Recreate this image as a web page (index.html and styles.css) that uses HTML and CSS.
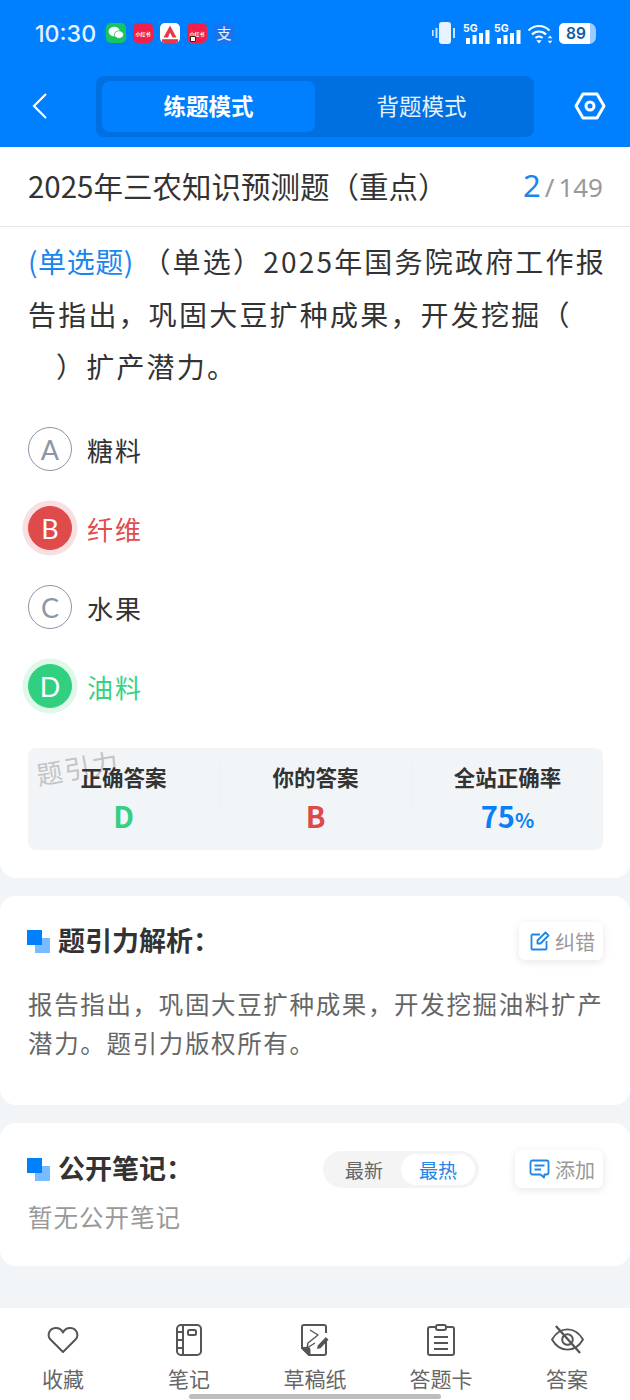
FILE: index.html
```html
<!DOCTYPE html>
<html lang="zh-CN">
<head>
  <meta charset="UTF-8">
  <meta name="viewport" content="width=device-width, initial-scale=1.0">
  <title>题引力</title>
  <link rel="stylesheet" href="styles.css">
</head>
<body>
  <div class="page">
    <header class="top">
      <div class="status">
        <span class="clock">10:30</span>
        <div class="notify">
          <span class="app app-wx">
            <svg width="16" height="14" viewBox="0 0 16 14"><ellipse cx="6.2" cy="5.6" rx="5.6" ry="4.8" fill="#fff"/><ellipse cx="11" cy="8.6" rx="4.6" ry="3.8" fill="#fff" stroke="#17c45e" stroke-width=".8"/></svg>
          </span>
          <span class="app app-red">小红书</span>
          <span class="app app-a">
            <svg width="20" height="20" viewBox="0 0 20 20"><path d="M10 2.5 16.5 14.5h-4L10 9.5 8 14.5H3.5z" fill="#e8374a"/><rect x="2" y="16.2" width="16" height="3.8" fill="#e8374a"/></svg>
          </span>
          <span class="app app-red app-dot">小红书</span>
          <span class="app app-ali">支</span>
        </div>
        <div class="sys">
          <svg width="28" height="22" viewBox="0 0 28 22"><rect x="8" y="0" width="12" height="22" rx="3" fill="#e8f2ff"/><rect x="1" y="8" width="1.6" height="6" fill="#cfe4ff"/><rect x="4.500" y="6" width="2" height="10" fill="#cfe4ff"/><rect x="22" y="6" width="2" height="10" fill="#cfe4ff"/></svg>
          <span class="signal">
            <b>5G</b>
            <svg width="25" height="21" viewBox="0 0 25 21"><rect x="1" y="15" width="4" height="6" fill="#fff"/><rect x="7.5" y="12" width="4" height="9" fill="#fff"/><rect x="14" y="10" width="4" height="11" fill="#fff"/><rect x="20.5" y="7" width="4" height="14" fill="#fff"/></svg>
          </span>
          <span class="signal">
            <b>5G</b>
            <svg width="25" height="21" viewBox="0 0 25 21"><rect x="1" y="15" width="4" height="6" fill="#fff"/><rect x="7.5" y="12" width="4" height="9" fill="#fff"/><rect x="14" y="10" width="4" height="11" fill="#fff"/><rect x="20.5" y="7" width="4" height="14" fill="#fff"/></svg>
          </span>
          <svg width="26" height="21" viewBox="0 0 26 21" fill="none" stroke="#fff" stroke-width="2.2"><path d="M1.5 7.5C7.5 1.5 16.5 1.5 22.5 7.5"/><path d="M5 11.5c4-4 10-4 14 0"/><path d="M8.500 15c2-2 5-2 7 0"/><path d="M12 20.500l-2.600-3.200h5.200z" fill="#fff" stroke="none"/><path d="M23 12.500l-2.300 2.800h4.600zM23 20.500l-2.300-2.800h4.600z" fill="#fff" stroke="none"/></svg>
          <span class="batt"><span class="batt-num">89</span></span>
        </div>
      </div>
      <div class="nav">
        <svg class="back" width="18" height="28" viewBox="0 0 18 28" fill="none" stroke="#fff" stroke-width="2.2"><path d="M15 2 3 14l12 12"/></svg>
        <div class="mode">
          <span class="mode-tab mode-on">练题模式</span>
          <span class="mode-tab">背题模式</span>
        </div>
        <svg class="gear" width="32" height="28" viewBox="0 0 32 28" fill="none" stroke="#fff" stroke-width="3"><path d="M9 2h14l7 12-7 12H9L2 14z" stroke-linejoin="round"/><circle cx="16" cy="14" r="4"/></svg>
      </div>
    </header>

    <main class="body">
      <section class="card card-q">
        <div class="q-title">
          <h1>2025年三农知识预测题（重点）</h1>
          <div class="count"><span class="count-now">2</span><span class="count-sep">/</span><span>149</span></div>
        </div>
        <p class="q-text"><span class="q-type">(单选题)</span> （单选）2025年国务院政府工作报告指出，巩固大豆扩种成果，开发挖掘（<br><span class="blank"></span>）扩产潜力。</p>
        <ul class="opts">
          <li class="opt"><span class="ball">A</span>糖料</li>
          <li class="opt opt-wrong"><span class="ball">B</span>纤维</li>
          <li class="opt"><span class="ball">C</span>水果</li>
          <li class="opt opt-right"><span class="ball">D</span>油料</li>
        </ul>
        <div class="result">
          <span class="mark">题引力</span>
          <div class="res-col"><span class="res-label">正确答案</span><span class="res-val green">D</span></div>
          <div class="res-col"><span class="res-label">你的答案</span><span class="res-val red">B</span></div>
          <div class="res-col"><span class="res-label">全站正确率</span><span class="res-val blue">75<small>%</small></span></div>
        </div>
      </section>

      <section class="card card-a">
        <div class="head">
          <span class="squares"></span>
          <h2>题引力解析：</h2>
          <span class="chip">
            <svg width="20" height="20" viewBox="0 0 20 20" fill="none" stroke="#1f86e8" stroke-width="1.800"><path d="M16.500 10v7.500a1 1 0 0 1-1 1H2.500a1 1 0 0 1-1-1v-13a1 1 0 0 1 1-1H10"/><path d="M7.500 12.500V9.500L15.500 1.500l3 3-8 8z" stroke-linejoin="round"/></svg>
            纠错
          </span>
        </div>
        <p class="explain">报告指出，巩固大豆扩种成果，开发挖掘油料扩产潜力。题引力版权所有。</p>
      </section>

      <section class="card card-n">
        <div class="head">
          <span class="squares"></span>
          <h2>公开笔记：</h2>
          <div class="sort"><span class="sort-item">最新</span><span class="sort-item sort-on">最热</span></div>
          <span class="chip">
            <svg width="21" height="20" viewBox="0 0 21 20" fill="none" stroke="#1f86e8" stroke-width="1.800"><path d="M3.500 1.500h14a2 2 0 0 1 2 2v10a2 2 0 0 1-2 2h-2l-.5 3-3.500-3h-8a2 2 0 0 1-2-2v-10a2 2 0 0 1 2-2z" stroke-linejoin="round"/><path d="M5.500 6.500h10M5.500 10.500h6.500"/></svg>
            添加
          </span>
        </div>
        <p class="none">暂无公开笔记</p>
      </section>
    </main>

    <nav class="tabs">
      <div class="tab">
        <div class="tab-icon"><svg width="32" height="28" viewBox="0 0 32 28" fill="none" stroke="#555" stroke-width="2"><path d="M16 26 3.500 13.500C0 10 1.500 2.500 8.500 2c3.500-.2 6 1.500 7.500 4.500C17.500 3.500 20 1.800 23.500 2c7 .5 8.500 8 5 11.500z" stroke-linejoin="round"/></svg></div>
        <span>收藏</span>
      </div>
      <div class="tab">
        <div class="tab-icon"><svg width="26" height="32" viewBox="0 0 26 32" fill="none" stroke="#555" stroke-width="2"><rect x="1" y="1" width="24" height="30" rx="4"/><path d="M7 1v30M1 8h6M1 16h6M1 24h6"/><rect x="12" y="6" width="8" height="5" rx="1.500"/></svg></div>
        <span>笔记</span>
      </div>
      <div class="tab">
        <div class="tab-icon"><svg width="28" height="32" viewBox="0 0 28 32" fill="none" stroke="#555" stroke-width="2"><path d="M25 9V3a2 2 0 0 0-2-2H3a2 2 0 0 0-2 2v21l7 7h15a2 2 0 0 0 2-2V17"/><path d="M1.500 24h5a2 2 0 0 1 2 2v4.500z" fill="#555"/><path d="M9 6l8 5-10 8-1 5 8-5" stroke-width="1.400" stroke-linejoin="round"/><path d="M16 25l.8-3.500 8-8.500 2.700 2.700-8 8.500z" fill="#555" stroke="none"/></svg></div>
        <span>草稿纸</span>
      </div>
      <div class="tab">
        <div class="tab-icon"><svg width="28" height="32" viewBox="0 0 28 32" fill="none" stroke="#555" stroke-width="2"><path d="M8 3H3a2 2 0 0 0-2 2v24a2 2 0 0 0 2 2h22a2 2 0 0 0 2-2V5a2 2 0 0 0-2-2h-5"/><rect x="9" y="1" width="10" height="5" rx="2"/><path d="M7 13h14M7 19h14M7 25h14"/></svg></div>
        <span>答题卡</span>
      </div>
      <div class="tab">
        <div class="tab-icon"><svg width="35" height="29" viewBox="0 0 36 30" fill="none" stroke="#555" stroke-width="2"><path d="M2 15C6 8 11 4.500 18 4.500S30 8 34 15c-4 7-9 10.500-16 10.500S6 22 2 15z" stroke-linejoin="round"/><circle cx="18" cy="15" r="5.500"/><path d="M6 1l25 28" stroke-width="2.400"/></svg></div>
        <span>答案</span>
      </div>
    </nav>
    <div class="home-bar"></div>
  </div>
</body>
</html>
```

FILE: styles.css
```css
* {
  box-sizing: border-box;
}
html, body {
  margin: 0;
  padding: 0;
}
body {
  font-family: "Noto Sans CJK SC", "Noto Sans", sans-serif;
  color: #333;
  background-color: #f2f5f8;
  text-spacing-trim: space-all;
}
h1, h2, p, ul {
  margin: 0;
  padding: 0;
}
.page {
  position: relative;
  width: 630px;
  height: 1400px;
  overflow: hidden;
  display: flex;
  flex-direction: column;
}

/* blue top area */
.top {
  height: 147px;
  background-color: #0080ff;
  color: #fff;
  flex: none;
}
.status {
  height: 68px;
  padding: 0 34px 0 35px;
  display: flex;
  align-items: center;
}
.clock {
  font-family: "Inter", sans-serif;
  font-size: 23.2px;
  font-weight: 500;
  color: #e6f2ff;
  width: 71px;
}
.notify {
  display: flex;
  gap: 7px;
  margin-bottom: 2px;
}
.app {
  width: 20px;
  height: 20px;
  border-radius: 5px;
  display: flex;
  align-items: center;
  justify-content: center;
  overflow: hidden;
  position: relative;
}
.app-wx {
  background-color: #17c45e;
}
.app-red {
  background-color: #f0204a;
  color: #fff;
  font-size: 5px;
  font-weight: 700;
}
.app-dot::after {
  content: "";
  position: absolute;
  left: 3px;
  bottom: 1px;
  width: 4px;
  height: 4px;
  background-color: #fff;
  border: 1px solid #222;
  border-radius: 1px;
}
.app-a {
  background-color: #fff;
}
.app-ali {
  background-color: #1a72ec;
  color: #e6f2ff;
  font-size: 15px;
  line-height: 20px;
}
.sys {
  margin-left: auto;
  margin-bottom: 2px;
  display: flex;
  align-items: center;
  gap: 6px;
}
.signal {
  position: relative;
  display: block;
  width: 25px;
  height: 21px;
}
.signal svg {
  display: block;
}
.signal b {
  position: absolute;
  left: -2px;
  top: 0;
  font-family: "Inter", sans-serif;
  font-size: 10.500px;
  font-weight: 700;
  line-height: 11px;
}
.batt {
  width: 37px;
  height: 21px;
  background: linear-gradient(to right, #fff 0, #fff 84%, #9dcbff 84%);
  border-radius: 5px 7px 7px 5px;
  display: flex;
  align-items: center;
  padding-left: 7px;
}
.batt-num {
  font-family: "Inter", sans-serif;
  font-size: 15.500px;
  font-weight: 600;
  color: #0b5cad;
}
.nav {
  height: 60px;
  margin-top: 8px;
  padding: 0 24px 0 31px;
  display: flex;
  align-items: center;
}
.back {
  flex: none;
}
.mode {
  width: 438px;
  height: 61px;
  margin-left: 47px;
  padding: 5px 6px;
  background-color: #0070e0;
  border-radius: 8px;
  display: flex;
}
.mode-tab {
  flex: 1;
  display: flex;
  align-items: center;
  justify-content: center;
  font-size: 22.500px;
  padding-bottom: 2px;
  border-radius: 8px;
  color: #e6f2ff;
}
.mode-on {
  background-color: #0080ff;
  color: #fff;
  font-weight: 700;
}
.gear {
  margin-left: auto;
  flex: none;
}

/* white cards */
.body {
  flex: 1;
  display: flex;
  flex-direction: column;
  gap: 18px;
}
.card {
  background-color: #fff;
  border-radius: 16px;
}
.card-q {
  height: 731px;
  border-radius: 0 0 16px 16px;
}
.q-title {
  height: 80px;
  padding: 0 27px 3px 28px;
  display: flex;
  align-items: center;
  justify-content: space-between;
  border-bottom: 1px solid #e6e6e6;
}
.q-title h1 {
  font-size: 29.500px;
  font-weight: 400;
  color: #333;
}
.count {
  font-family: "Noto Sans", sans-serif;
  font-size: 26px;
  color: #999;
  display: flex;
  align-items: baseline;
}
.count-now {
  font-size: 31px;
  color: #1a86f0;
}
.count-sep {
  margin: 0 4px;
}
.q-text {
  margin-top: 8px;
  padding: 0 20px 0 28px;
  font-size: 28px;
  line-height: 52.500px;
  letter-spacing: 2.200px;
}
.q-type {
  color: #1a86f0;
  letter-spacing: .6px;
}
.blank {
  display: inline-block;
  width: 28px;
}
.opts {
  list-style: none;
  margin-top: 17px;
  padding-left: 28px;
}
.opt {
  height: 79px;
  display: flex;
  align-items: center;
  gap: 15px;
  font-size: 26px;
  letter-spacing: 2px;
}
.ball {
  width: 44px;
  height: 44px;
  flex: none;
  border-radius: 50%;
  border: 1.500px solid #8e95a8;
  color: #8e95a8;
  display: flex;
  align-items: center;
  justify-content: center;
  font-family: "Lato", sans-serif;
  font-size: 27px;
  letter-spacing: 0;
}
.opt-wrong {
  color: #df4d4d;
}
.opt-wrong .ball {
  background-color: #df4a4a;
  border-color: #df4a4a;
  color: #fff;
  box-shadow: 0 0 0 5.500px #f9dfe0;
}
.opt-right {
  color: #35d384;
}
.opt-right .ball {
  background-color: #30d080;
  border-color: #30d080;
  color: #fff;
  box-shadow: 0 0 0 5.500px #dff8ea;
}
.result {
  position: relative;
  margin: 22px 27px 0 28px;
  height: 102px;
  background-color: #f2f5f8;
  border-radius: 8px;
  display: flex;
  padding-top: 14px;
}
.mark {
  position: absolute;
  left: 8px;
  top: 0;
  font-size: 26px;
  color: #c4c4c4;
  transform: rotate(-10deg);
  letter-spacing: 2px;
  line-height: 38px;
}
.res-col {
  position: relative;
  flex: 1;
  display: flex;
  flex-direction: column;
  align-items: center;
  border-left: 1px solid #edf0f3;
  height: 46px;
}
.res-col:first-of-type {
  border-left: 0;
}
.res-label {
  font-size: 21.500px;
  font-weight: 700;
  line-height: 30px;
  color: #333;
  position: absolute;
  top: 0;
  white-space: nowrap;
}
.res-val {
  position: absolute;
  top: 34px;
  font-size: 29px;
  line-height: 38px;
  font-weight: 700;
}
.res-val small {
  font-size: 20px;
}
.green {
  color: #35cf85;
}
.red {
  color: #dc4a4a;
}
.blue {
  color: #0a80f5;
}
.card-a {
  height: 209px;
}
.card-n {
  height: 143px;
}
.head {
  display: flex;
  align-items: center;
  height: 38px;
  padding: 0 27px 0 27px;
}
.card-a .head {
  margin-top: 26px;
}
.card-n .head {
  margin-top: 27px;
}
.squares {
  position: relative;
  display: block;
  width: 23px;
  height: 23px;
  margin-right: 8px;
  flex: none;
}
.squares::before, .squares::after {
  content: "";
  position: absolute;
}
.squares::after {
  right: 0;
  bottom: 0;
  width: 15px;
  height: 15px;
  background-color: #78bcff;
}
.squares::before {
  left: 0;
  top: 0;
  width: 15px;
  height: 15px;
  background-color: #0080ff;
  z-index: 1;
}
.head h2 {
  font-size: 27px;
  font-weight: 700;
  color: #333;
  margin-top: -3px;
  white-space: nowrap;
}
.chip {
  margin-left: auto;
  height: 38px;
  padding: 0 8px 0 11px;
  display: flex;
  align-items: center;
  gap: 5px;
  font-size: 20px;
  color: #999;
  background-color: #fff;
  border-radius: 6px;
  box-shadow: 0 2px 8px rgba(0, 0, 0, .1);
}
.explain {
  margin-top: 24px;
  padding: 0 25px 0 28px;
  font-size: 24.500px;
  line-height: 39px;
  letter-spacing: 1.650px;
  color: #666;
}
.sort {
  margin-left: auto;
  width: 156px;
  height: 37px;
  background-color: #f4f4f4;
  border-radius: 19px;
  padding: 3px 4px;
  display: flex;
  font-size: 19px;
  color: #666;
}
.sort-item {
  flex: 1;
  display: flex;
  align-items: center;
  justify-content: center;
  border-radius: 16px;
}
.sort-on {
  background-color: #fff;
  color: #1f86e8;
}
.sort + .chip {
  margin-left: 36px;
  padding-left: 14px;
}
.none {
  margin-top: 11px;
  padding-left: 28px;
  font-size: 24.500px;
  color: #999;
  letter-spacing: 1px;
}

/* bottom bar */
.tabs {
  position: absolute;
  left: 0;
  right: 0;
  bottom: 0;
  height: 92px;
  background-color: #fff;
  display: flex;
  padding: 15px 0 0 0;
}
.tab {
  flex: 1;
  display: flex;
  flex-direction: column;
  align-items: center;
  font-size: 21px;
  color: #666;
}
.tab-icon {
  height: 33px;
  display: flex;
  align-items: center;
  justify-content: center;
}
.tab span {
  margin-top: 7px;
  line-height: 30px;
}
.home-bar {
  position: absolute;
  left: 189px;
  bottom: 1px;
  width: 252px;
  height: 5px;
  border-radius: 3px;
  background-color: #bdbdbd;
}
```
